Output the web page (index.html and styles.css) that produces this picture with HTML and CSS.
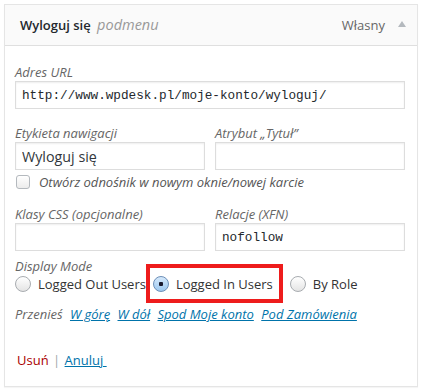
FILE: index.html
```html
<!DOCTYPE html>
<html lang="pl">
<head>
    <meta charset="UTF-8" />
    <title>Menu item</title>
    <link rel="stylesheet" href="styles.css">
</head>
<body>
    <div class="menu-item">
        <div class="item-bar">
            <span class="item-title">Wyloguj się <em>podmenu</em></span>
            <span class="item-type">Własny <span class="arrow"></span></span>
        </div>
        <div class="item-settings">
            <div class="field wide">
                <label>Adres URL</label>
                <input type="text" class="code" value="http://www.wpdesk.pl/moje-konto/wyloguj/">
            </div>
            <div class="row">
                <div class="field">
                    <label>Etykieta nawigacji</label>
                    <input type="text" value="Wyloguj się">
                </div>
                <div class="field">
                    <label>Atrybut „Tytuł”</label>
                    <input type="text" value="">
                </div>
            </div>
            <div class="check">
                <input type="checkbox">
                <span>Otwórz odnośnik w nowym oknie/nowej karcie</span>
            </div>
            <div class="row">
                <div class="field">
                    <label>Klasy CSS (opcjonalne)</label>
                    <input type="text" value="">
                </div>
                <div class="field">
                    <label>Relacje (XFN)</label>
                    <input type="text" class="code" value="nofollow">
                </div>
            </div>
            <div class="display-mode">
                <label class="caption">Display Mode</label>
                <div class="radios">
                    <label class="radio"><input type="radio" name="mode"> Logged Out Users</label>
                    <label class="radio highlight"><input type="radio" name="mode" checked> Logged In Users</label>
                    <label class="radio"><input type="radio" name="mode"> By Role</label>
                </div>
            </div>
            <div class="move">
                Przenieś
                <a href="#">W górę</a>
                <a href="#">W dół</a>
                <a href="#">Spod Moje konto</a>
                <a href="#">Pod Zamówienia</a>
            </div>
            <div class="actions">
                <a href="#" class="delete">Usuń</a>
                <span class="sep">|</span>
                <a href="#" class="cancel">Anuluj&nbsp;</a>
            </div>
        </div>
    </div>
</body>
</html>
```

FILE: styles.css
```css
body {
    margin: 0;
    padding: 4px;
    background: #fff;
    font-family: "Open Sans", sans-serif;
    font-size: 13px;
    line-height: 18px;
    color: #444;
}
.menu-item {
    width: 412px;
    border: 1px solid #e5e5e5;
    box-shadow: 0 1px 1px rgba(0,0,0,0.04);
}
.item-bar {
    height: 40px;
    background: #fafafa;
    border-bottom: 1px solid #dfdfdf;
    display: flex;
    align-items: center;
    justify-content: space-between;
    padding: 0 11px 0 15px;
}
.item-title {
    font-size: 13px;
    font-weight: 600;
    color: #23282d;
}
.item-title em {
    font-size: 14.5px;
    font-weight: 400;
    color: #999;
    margin-left: 3px;
}
.item-type {
    color: #666;
    display: flex;
    align-items: center;
}
.arrow {
    width: 0;
    height: 0;
    border-left: 4px solid transparent;
    border-right: 4px solid transparent;
    border-bottom: 6px solid #b4b9be;
    margin-left: 13px;
    margin-bottom: 2px;
}
.item-settings {
    padding: 17px 10px 17px 10px;
}
.field label,
.caption {
    display: block;
    font-style: italic;
    color: #666;
    line-height: 18px;
}
.field input {
    display: block;
    width: 100%;
    height: 28px;
    box-sizing: border-box;
    margin: 0;
    border: 1px solid #ddd;
    box-shadow: inset 0 1px 2px rgba(0,0,0,0.07);
    padding: 3px 6px;
    font-family: "Open Sans", sans-serif;
    font-size: 14.3px;
    color: #32373c;
    outline: none;
}
.field.wide input {
    width: 390px;
}
.field input.code {
    font-family: "Liberation Mono", monospace;
    font-size: 12.7px;
    color: #23282d;
}
.row {
    display: flex;
    gap: 10px;
    width: 390px;
    margin-top: 15px;
}
.row .field {
    flex: 1;
}
.check {
    display: flex;
    align-items: center;
    height: 18px;
    margin-top: 3px;
    font-style: italic;
    color: #555;
}
.check input {
    appearance: none;
    width: 14px;
    height: 14px;
    margin: 0 9px 0 1px;
    border: 1px solid #b4b9be;
    border-radius: 3px;
    background: linear-gradient(#fff, #ececec);
}
.check + .row {
    margin-top: 14px;
}
.display-mode {
    margin-top: 6px;
}
.radios {
    display: flex;
    align-items: center;
    height: 20px;
    margin-top: -1px;
    color: #333;
}
.radio {
    display: flex;
    align-items: center;
    height: 20px;
}
.radio input {
    appearance: none;
    width: 16px;
    height: 16px;
    margin: 0 7px 0 0;
    border: 1px solid #a8acb0;
    border-radius: 50%;
    background: linear-gradient(#fff, #e4e4e4);
}
.radio input:checked {
    border-color: #6c8fb8;
    background: radial-gradient(circle, #1a1a2e 0, #1a1a2e 2px, transparent 2.5px), linear-gradient(#d6e9fb, #9cc8f0);
}
.radio.highlight {
    margin: -3px 0 -2px 7px;
    padding: 3px 3px 2px 0;
    outline: 4px solid #ee1c1c;
    outline-offset: 3px;
}
.radio + .radio:last-child {
    margin-left: 14px;
}
.move {
    margin-top: 11px;
    font-style: italic;
    color: #666;
}
.move a {
    color: #0073aa;
    margin-left: 4px;
}
.actions {
    margin-top: 28px;
    padding-left: 2px;
}
.delete {
    color: #a00;
    text-decoration: none;
}
.sep {
    color: #a0a5aa;
    margin: 0 1px;
}
.cancel {
    color: #0073aa;
}
```
